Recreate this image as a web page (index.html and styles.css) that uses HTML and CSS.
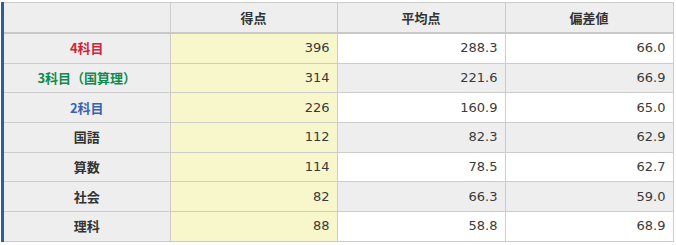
FILE: index.html
```html
<!DOCTYPE html>
<html lang="ja">
<head>
<meta charset="utf-8">
<link rel="stylesheet" href="styles.css">
</head>
<body>
<div class="wrap">
<table class="score">
<colgroup>
<col class="c1"><col class="c2"><col class="c3"><col class="c4">
</colgroup>
<thead>
<tr><th class="corner"></th><th>得点</th><th>平均点</th><th>偏差値</th></tr>
</thead>
<tbody>
<tr class="odd"><th class="red">4科目</th><td class="mine">396</td><td>288.3</td><td>66.0</td></tr>
<tr class="even"><th class="green">3科目（国算理）</th><td class="mine">314</td><td>221.6</td><td>66.9</td></tr>
<tr class="odd"><th class="blue">2科目</th><td class="mine">226</td><td>160.9</td><td>65.0</td></tr>
<tr class="even"><th>国語</th><td class="mine">112</td><td>82.3</td><td>62.9</td></tr>
<tr class="odd"><th>算数</th><td class="mine">114</td><td>78.5</td><td>62.7</td></tr>
<tr class="even"><th>社会</th><td class="mine">82</td><td>66.3</td><td>59.0</td></tr>
<tr class="odd"><th>理科</th><td class="mine">88</td><td>58.8</td><td>68.9</td></tr>
</tbody>
</table>
</div>
</body>
</html>
```

FILE: styles.css
```css
html, body {
  margin: 0;
  padding: 0;
  background: #fff;
}
body {
  font-family: "DejaVu Sans", "Noto Sans CJK JP", sans-serif;
  font-size: 13px;
  color: #333;
}
.wrap {
  margin: 2px 0 0 1px;
  width: 672px;
  border-left: 3px solid #2e5e96;
  box-sizing: border-box;
}
.score {
  width: 669px;
  border-collapse: collapse;
  table-layout: fixed;
}
.c1 { width: 166px; }
.c2 { width: 167px; }
.c3 { width: 168px; }
.c4 { width: 168px; }
.score th, .score td {
  border: 1px solid #cccccc;
  padding: 0 7px 0 7px;
  height: 28.7px;
  line-height: 18px;
}
.score thead th {
  background: #eeeeee;
  font-family: "Noto Sans CJK JP", sans-serif;
  font-weight: bold;
  text-align: center;
  border-bottom: 2px solid #c8c8c8;
  height: 29px;
}
.score tr > :first-child {
  border-left: none;
}
.score tbody th {
  background: #eeeeee;
  font-family: "Noto Sans CJK JP", sans-serif;
  font-weight: bold;
  text-align: center;
}
.score td {
  text-align: right;
  color: #3a3a3a;
}
.score tr.odd td { background: #ffffff; }
.score tr.even td { background: #eeeeee; }
.score td.mine, .score tr.odd td.mine, .score tr.even td.mine { background: #f8f6cb; }
.red { color: #d0243a; }
.green { color: #0e8a4e; }
.blue { color: #3a62b2; }
```
